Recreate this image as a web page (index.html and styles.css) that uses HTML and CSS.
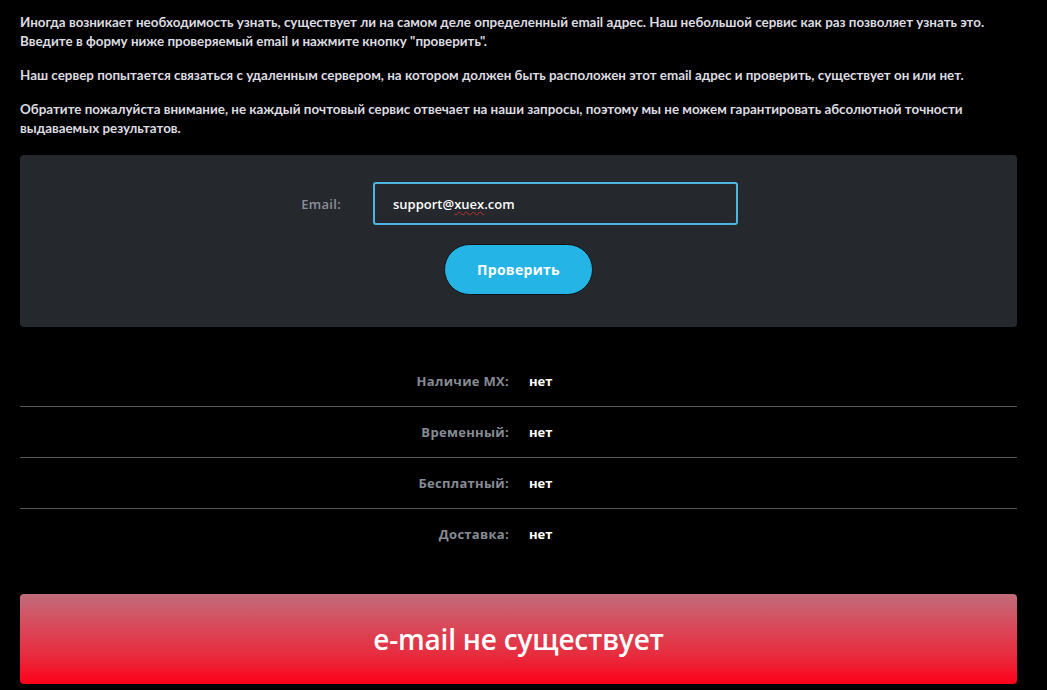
FILE: index.html
```html
<!DOCTYPE html>
<html lang="ru">
<head>
<meta charset="utf-8">
<link rel="stylesheet" href="styles.css">
</head>
<body>
<div class="page">
  <div class="intro">
    <p>Иногда возникает необходимость узнать, существует ли на самом деле определенный email адрес. Наш небольшой сервис как раз позволяет узнать это.<br>Введите в форму ниже проверяемый email и нажмите кнопку "проверить".</p>
    <p>Наш сервер попытается связаться с удаленным сервером, на котором должен быть расположен этот email адрес и проверить, существует он или нет.</p>
    <p>Обратите пожалуйста внимание, не каждый почтовый сервис отвечает на наши запросы, поэтому мы не можем гарантировать абсолютной точности<br>выдаваемых результатов.</p>
  </div>
  <div class="panel">
    <div class="field">
      <label class="field-label">Email:</label>
      <div class="input"><span class="typed">support@<span class="spell">xuex</span>.com</span></div>
    </div>
    <button class="check">Проверить</button>
  </div>
  <div class="results">
    <div class="row"><span class="key">Наличие MX:</span><span class="val">нет</span></div>
    <div class="row"><span class="key">Временный:</span><span class="val">нет</span></div>
    <div class="row"><span class="key">Бесплатный:</span><span class="val">нет</span></div>
    <div class="row"><span class="key">Доставка:</span><span class="val">нет</span></div>
  </div>
  <div class="verdict">e-mail не существует</div>
</div>
</body>
</html>
```
FILE: styles.css
```css
html, body {
  margin: 0;
  padding: 0;
  background: #000;
}
body {
  font-family: "Open Sans", "Liberation Sans", sans-serif;
  color: #dcdce2;
}
.page {
  padding: 13px 30px 0 20px;
}
.intro p {
  margin: 0 0 15px 0;
  font-family: "Lato", "Open Sans", sans-serif;
  font-size: 13.4px;
  line-height: 19px;
  font-weight: 700;
  white-space: nowrap;
}
.intro p:last-child {
  margin-bottom: 0;
}
.intro {
  margin-bottom: 17px;
}
.panel {
  background: #25282d;
  border-radius: 4px;
  height: 172px;
  box-sizing: border-box;
  padding-top: 27px;
  display: flex;
  flex-direction: column;
  align-items: center;
}
.field {
  display: flex;
  align-items: center;
  width: 100%;
}
.field-label {
  width: 321px;
  text-align: right;
  font-size: 13px;
  font-weight: 600;
  color: #8a8f99;
  letter-spacing: 0.3px;
}
.input {
  margin-left: 32px;
  width: 365px;
  height: 43px;
  box-sizing: border-box;
  border: 2px solid #4cb6e0;
  border-radius: 3px;
  background: #25282d;
  display: flex;
  align-items: center;
  padding-left: 18px;
  font-size: 13px;
  font-weight: 600;
  color: #fff;
}
.spell {
  text-decoration: underline wavy #c0302a;
  text-decoration-thickness: 1px;
  text-underline-offset: 2px;
}
.check {
  margin-top: 19px;
  width: 149px;
  height: 51px;
  border-radius: 26px;
  border: 1px solid #101214;
  background: #24b4e6;
  color: #fff;
  font-family: "Open Sans", sans-serif;
  font-size: 14px;
  font-weight: 700;
  letter-spacing: 0.3px;
}
.results {
  margin-top: 29px;
}
.row {
  display: flex;
  align-items: center;
  height: 50px;
  border-bottom: 1px solid #555;
}
.row:last-child {
  border-bottom: none;
}
.key {
  width: 489px;
  text-align: right;
  font-size: 13px;
  font-weight: 700;
  color: #868b95;
  letter-spacing: 0.3px;
}
.val {
  margin-left: 20px;
  font-size: 13px;
  font-weight: 700;
  color: #fff;
}
.verdict {
  margin-top: 35px;
  height: 90px;
  border-radius: 4px;
  background: linear-gradient(to bottom, #c16c7a 0%, #d84a5a 35%, #e82a3c 70%, #ff0019 100%);
  color: #fff;
  font-size: 28px;
  font-weight: 600;
  display: flex;
  align-items: center;
  justify-content: center;
  letter-spacing: -0.2px;
}
```
